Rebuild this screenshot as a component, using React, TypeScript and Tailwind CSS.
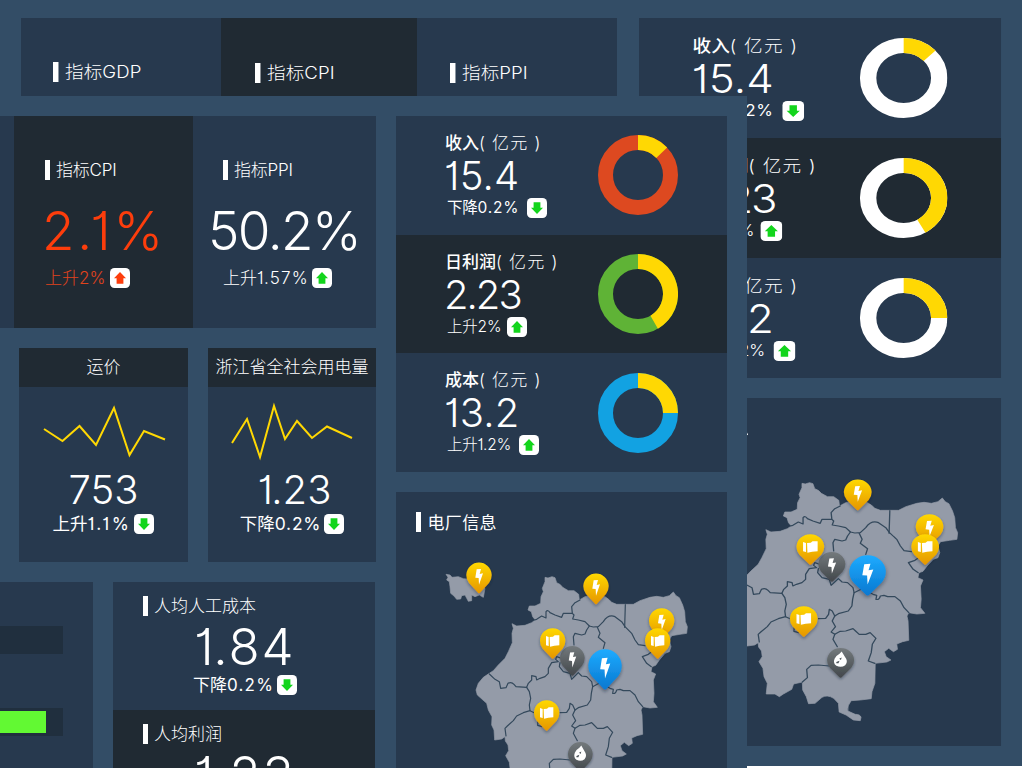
import type { ReactNode } from "react";
import clsx from "clsx";

const FONT = "font-['Inter','Noto_Sans_CJK_SC',sans-serif] [font-feature-settings:'cv01']";

function Badge({ dir, red }: { dir: "up" | "down"; red?: boolean }) {
  return (
    <svg viewBox="0 0 20 20" className={clsx("h-5 w-5 shrink-0", dir === "down" && "rotate-180")}>
      <rect width="20" height="20" rx="4.5" fill="#fff" />
      <path d="M10 4 L16 10.2 H13.4 V15.8 H6.6 V10.2 H4 Z" fill={red ? "#fd3d0c" : "#13d51c"} />
    </svg>
  );
}

function Heading({ children }: { children: ReactNode }) {
  return (
    <div className="flex h-5 items-center gap-[6px]">
      <span className="h-5 w-[5px] shrink-0 bg-white" />
      <span className="text-[17px] leading-5 font-light whitespace-nowrap text-white">{children}</span>
    </div>
  );
}

function Tab({ label, className }: { label: string; className: string }) {
  return (
    <div className={clsx("h-[78px]", className)}>
      <div className="flex h-5 w-max origin-left scale-x-[1.0937] items-center gap-[6px]">
        <span className="h-5 w-[5px] bg-white" />
        <span className="text-[17px] leading-5 font-light tracking-[0.05px] whitespace-nowrap text-white">{label}</span>
      </div>
    </div>
  );
}

const metrics = [
  { name: "收入", value: "15.4", change: "下降", amount: "0.2%", dir: "down" as const, pct: 13, color: "#dd4920", dark: false, gap: "gap-[8px]", num: "tracking-[0.2px]", sub: "", amt: "tracking-[0.8px]" },
  { name: "日利润", value: "2.23", change: "上升", amount: "2%", dir: "up" as const, pct: 41.7, color: "#5fb336", dark: true, gap: "gap-[6px]", num: "tracking-[-2px]", sub: "font-light", amt: "tracking-[-0.1px]" },
  { name: "成本", value: "13.2", change: "上升", amount: "1.2%", dir: "up" as const, pct: 25, color: "#12a2e2", dark: false, gap: "gap-[8px]", num: "tracking-[0.2px]", sub: "font-light", amt: "tracking-normal" },
];

function Donut({ pct, color }: { pct: number; color: string }) {
  const a = (pct / 100) * 2 * Math.PI;
  const x = 40 + 32.5 * Math.sin(a);
  const y = 40 - 32.5 * Math.cos(a);
  return (
    <svg viewBox="0 0 80 80" className="h-20 w-20">
      <g fill="none" strokeWidth="15">
        <circle cx="40" cy="40" r="32.5" stroke={color} />
        <path d={`M40 7.5 A32.5 32.5 0 0 1 ${x} ${y}`} stroke="#ffd803" />
      </g>
    </svg>
  );
}

function Metrics({ row, white }: { row: string; white?: boolean }) {
  return (
    <div className="flex flex-col">
      {metrics.map((m) => (
        <div key={m.name} className={clsx("flex", row, m.dark ? "bg-[#202a33]" : "bg-[#27394e]")}>
          <div className="w-[202px] pt-[15px] pl-[49px] text-white">
            <div className="h-6 text-[17px] leading-6 font-light whitespace-pre">
              <span className="font-medium">{m.name}</span>
              <span className="tracking-[1.2px]">( 亿元 )</span>
            </div>
            <div className={clsx("-ml-px h-[41px] text-[40px] leading-[41px] font-light", m.num)}>{m.value}</div>
            <div className={clsx("flex h-6 items-center pl-0.5 text-[15.5px]", m.gap)}>
              <span className={clsx("leading-6 tracking-[-0.2px] whitespace-nowrap", m.sub)}>
                {m.change}
                <span className={m.amt}>{m.amount}</span>
              </span>
              <Badge dir={m.dir} />
            </div>
          </div>
          <div className="pt-[19.3px]">
            <Donut pct={m.pct} color={white ? "#ffffff" : m.color} />
          </div>
        </div>
      ))}
    </div>
  );
}

const land =
  "M465 292 L474 294 L486 290 L495 293 L500 308 Q512 312 518 322 L535 332 L552 332 L566 343 L568 360 L585 350 L618 340 L645 350 Q660 360 665 367 L680 373 H730 L750 362 L780 352 L800 349 L820 352 L838 347 L850 336 L858 347 L868 353 L878 375 L884 395 L886 425 L892 440 L890 460 L870 463 L845 467 L838 480 L843 500 L838 515 L825 520 L808 540 L797 556 L786 560 L783 575 L797 582 L790 600 L792 640 L790 665 L802 682 L780 684 L758 680 L753 690 L756 705 L758 763 L741 767 L725 774 L727 790 L716 797 L703 787 L691 797 L696 812 L709 822 L698 828 L666 832 L665 892 L657 917 L655 938 L625 942 L600 944 Q588 960 591 975 L611 985 Q625 985 627 994 L625 1004 L606 1002 L586 987 L567 978 L565 952 L552 937 Q535 925 520 934 L501 952 L483 953 L477 932 L467 912 L466 888 L442 894 L437 910 L414 924 L403 932 L391 924 L367 924 L370 892 L361 872 L358 847 L347 827 L356 812 L354 795 L346 783 L345 770 L335 777 L314 780 L312 750 L305 735 L306 710 L295 690 L290 670 L262 645 L258 630 L265 610 L280 592 L298 580 L310 572 L325 555 L345 535 L355 515 L367 488 L366 460 L370 445 L366 431 L380 438 L405 436 L425 428 L436 420 L428 410 L424 395 L414 390 L418 378 L435 378 L452 370 L453 350 L460 335 L457 325 L465 305 Z M168 283 L180 285 L186 292 L205 290 L220 296 L232 297 L285 325 L280 352 L268 345 L255 350 L245 345 L245 362 L235 364 L225 345 L215 347 L212 357 L200 358 L192 348 L182 340 L180 320 L178 305 L170 300 L174 292 Z";

const borders = [
  "M433 420 L440 418 L455 408 L468 414 V395 Q474 388 480 398 L495 405 L515 412 L520 400 L547 400 L545 380 L555 368 L570 360",
  "M547 400 L552 405 L548 417 L565 420 L585 425 L598 438 L610 441 L625 440 L640 425 Q655 402 675 410 L695 425 L705 440 L725 460 L735 480 L745 494 L765 497",
  "M706 374 L704 442",
  "M598 438 L590 450 L585 462 L575 465 L555 460 L550 470 L552 495",
  "M622 442 L630 460 L625 472 L645 488 L640 505",
  "M298 582 L315 598 L328 605 L332 625 L348 623 L354 610 Q364 604 372 613 L378 620 L410 622 L415 610 L425 600 L425 587 L438 590 L440 600 L450 595 L465 590 L475 580 L475 565 L485 548 L505 545 L497 538 L500 530 L515 535",
  "M410 622 L418 635 L422 655 L418 675 L420 692 L400 698 L380 708 L370 722 L352 738 L345 745 L348 768",
  "M420 692 L440 702",
  "M510 548 L508 560 L520 575 L540 580 L545 598 L565 578 L575 588 L590 590 L605 605 L608 620 L604 640 L602 660 L592 675 L565 683 L555 690 L548 675 L540 670 L538 685 L530 697 L510 698",
  "M444 720 L443 736 L456 740",
  "M608 620 L630 608 L660 625 L670 628 L668 640 Q677 643 680 630 L690 628 L700 632 L720 632 L735 645 L745 665 L758 680",
  "M555 690 L548 705 L557 722 L545 738 L555 745 L570 736 L585 735 L605 728 L612 735 L622 745 L640 745 L652 740 L668 757 L658 775 L655 800 L647 825 L665 832",
  "M555 745 L550 760 L562 782",
  "M466 888 L480 875 L478 850 L490 838 L510 837 L540 840",
  "M785 515 L775 523 L757 530 L770 550 L784 560",
];

type PinKind = "bolt" | "book" | "drop";

const pins: { x: number; y: number; r: number; fill: string; kind: PinKind }[] = [
  { x: 267, y: 285, r: 38, fill: "gold", kind: "bolt" },
  { x: 618, y: 318, r: 38, fill: "gold", kind: "bolt" },
  { x: 815, y: 422, r: 38, fill: "gold", kind: "bolt" },
  { x: 547, y: 534, r: 37, fill: "grey", kind: "bolt" },
  { x: 488, y: 482, r: 38, fill: "gold", kind: "book" },
  { x: 803, y: 482, r: 38, fill: "gold", kind: "book" },
  { x: 645, y: 557, r: 50, fill: "blue", kind: "bolt" },
  { x: 470, y: 698, r: 38, fill: "gold", kind: "book" },
  { x: 571, y: 822, r: 37, fill: "grey", kind: "drop" },
];

const glyphs: Record<PinKind, ReactNode> = {
  bolt: <path d="M-7 -19 L6 -20 L2 -5 L12 -7 L0 27 L-1 7 L-11 6 Z" fill="#fff" />,
  book: (
    <g fill="#fff">
      <path d="M-20 -16 L-12 -13 V14 L-20 12 Z" />
      <path d="M-9 -13 L1 -14 L6 -18 L20 -18 V12 L5 13 L-8 16 Z" />
    </g>
  ),
  drop: (
    <>
      <path d="M3 -28 L12 -12 Q23 3 13 14 Q2 23 -12 16 Q-22 8 -17 -6 Q-13 -15 -3 -21 Z" fill="#fff" />
      <path d="M-4 -6 L3 -10 L1 -2 Z M-12 4 L-3 0 L-6 8 L-12 8 Z" fill="#4b5258" />
    </>
  ),
};

function PlantMap({ id }: { id: string }) {
  return (
    <svg viewBox="18 36 993 1044" className="block h-[348px] w-[331px]">
      <defs>
        <linearGradient id={`${id}-gold`} x1="0" y1="0" x2="0" y2="1">
          <stop offset="0" stopColor="#ffd800" />
          <stop offset="1" stopColor="#e59600" />
        </linearGradient>
        <linearGradient id={`${id}-grey`} x1="0" y1="0" x2="0" y2="1">
          <stop offset="0" stopColor="#747a7d" />
          <stop offset="1" stopColor="#42474b" />
        </linearGradient>
        <linearGradient id={`${id}-blue`} x1="0" y1="0" x2="0" y2="1">
          <stop offset="0" stopColor="#1eabff" />
          <stop offset="1" stopColor="#0878d0" />
        </linearGradient>
        <filter id={`${id}-shadow`} x="-30%" y="-30%" width="160%" height="160%">
          <feDropShadow dx="0" dy="5" stdDeviation="4" floodColor="#1c2733" floodOpacity="0.45" />
        </filter>
      </defs>
      <path d={land} fill="#949ba8" stroke="#949ba8" strokeWidth="2" strokeLinejoin="round" />
      <g fill="none" stroke="#34495c" strokeWidth="3.6" strokeLinejoin="round" strokeLinecap="round">
        {borders.map((d) => (
          <path key={d} d={d} />
        ))}
      </g>
      {pins.map((p) => (
        <g key={`${p.x}-${p.y}`} transform={`translate(${p.x} ${p.y})`}>
          <g transform={`scale(${p.r / 38})`}>
            <path
              d="M-30 24 A38 38 0 1 1 30 24 L3 53 Q0 56 -3 53 Z"
              fill={`url(#${id}-${p.fill})`}
              filter={`url(#${id}-shadow)`}
            />
            <g transform="translate(0 2)">{glyphs[p.kind]}</g>
          </g>
        </g>
      ))}
    </svg>
  );
}

function MapPanel({ id }: { id: string }) {
  return (
    <div className="relative h-[348px] w-[331px] shrink-0 bg-[#27394e]">
      <PlantMap id={id} />
      <div className="absolute top-5 left-5 flex h-5 items-center gap-[6.5px]">
        <span className="h-5 w-[5px] bg-white" />
        <span className="pt-px text-[17px] leading-5 tracking-[0.35px] text-white">电厂信息</span>
      </div>
    </div>
  );
}

function Stat({ title, points, value, change, amount, amt, className, num }: { title: string; points: string; value: string; change: string; amount: string; amt: string; className: string; num: string }) {
  return (
    <div className={clsx("flex h-[213.5px] flex-col items-center bg-[#27394e] text-white", className)}>
      <div className="h-[39px] w-full bg-[#202a33] text-center text-[17px] leading-[38px] font-light whitespace-nowrap">{title}</div>
      <svg viewBox="0 0 168 84" className="h-[84px] w-[168px] shrink-0">
        <polyline points={points} fill="none" stroke="#ffd803" strokeWidth="2" strokeLinejoin="miter" />
      </svg>
      <div className={clsx("h-[38px] text-[40px] leading-[38px] font-light", num)}>{value}</div>
      <div className="mt-[3px] flex h-6 items-center gap-[3px] text-[17.5px]">
        <span className="leading-6 whitespace-nowrap">
          {change}
          <span className={amt}>{amount}</span>
        </span>
        <Badge dir="down" />
      </div>
    </div>
  );
}

function PerCapita({ title, value, className }: { title: string; value: string; className: string }) {
  return (
    <div className={clsx("h-32 pl-[30px] text-white", className)}>
      <Heading>{title}</Heading>
      <div className="mt-[5px] h-[52px] pl-[51px] text-[51px] leading-[52px] font-light tracking-[1.8px]">{value}</div>
      <div className="flex h-6 items-center gap-[3px] pl-[50px] text-[17px]">
        <span className="leading-6 whitespace-nowrap">
          下降<span className="tracking-[1.2px]">0.2%</span>
        </span>
        <Badge dir="down" />
      </div>
    </div>
  );
}

export default function App() {
  return (
    <div className={clsx("relative h-[768px] w-[1022px] overflow-hidden bg-[#334d66]", FONT)}>
      <div className="flex gap-[22px] pt-[18px] pl-[21px]">
        <div className="flex h-[78px] w-[596px]">
          <Tab label="指标GDP" className="w-[200px] bg-[#27394e] pt-11 pl-8" />
          <Tab label="指标CPI" className="w-[196px] bg-[#202a33] pt-[45px] pl-[34px]" />
          <Tab label="指标PPI" className="w-[200px] bg-[#27394e] pt-[45px] pl-[33px]" />
        </div>
        <div className="w-[362px]">
          <div className="flex w-[331px] origin-left scale-x-[1.0937] flex-col gap-5">
            <Metrics row="h-[120px] pt-px" white />
            <MapPanel id="back" />
          </div>
        </div>
      </div>
      <div className="mt-5 h-[3px] bg-white" />

      <div className="absolute top-24 left-0 flex h-[672px] w-[747px] gap-5 overflow-hidden bg-[#334d66] pt-5">
        <div className="flex w-[376px] flex-col">
          <div className="flex h-[212px] shrink-0">
            <div className="w-3.5 bg-[#27394e]" />
            <div className="w-[179px] bg-[#202a33] pt-11 pl-[31px]">
              <Heading>
                <span className="tracking-[-0.2px]">指标CPI</span>
              </Heading>
              <div className="mt-6 -ml-[3px] h-[54px] text-[53px] leading-[54px] font-light tracking-[2.7px] text-[#fd3d0c]">2.1%</div>
              <div className="mt-2 flex h-6 items-center gap-[5px] text-[17px] text-[#e0431c]">
                <span className="leading-6 font-light whitespace-nowrap">上升2%</span>
                <Badge dir="up" red />
              </div>
            </div>
            <div className="w-[183px] bg-[#27394e] pt-11 pl-[30px] text-white">
              <Heading>
                <span className="tracking-[-0.2px]">指标PPI</span>
              </Heading>
              <div className="mt-6 -ml-[15px] h-[54px] text-[53px] leading-[54px] font-[350] tracking-[-1.6px] whitespace-nowrap">50.2%</div>
              <div className="mt-2 flex h-6 items-center gap-[3px] text-[17px]">
                <span className="leading-6 font-light whitespace-nowrap">
                  上升<span className="tracking-[1.2px]">1.57%</span>
                </span>
                <Badge dir="up" />
              </div>
            </div>
          </div>
          <div className="mt-5 flex shrink-0 gap-5 pl-[19px]">
            <Stat
              title="运价"
              points="24,42 42.5,54 59.5,39 76,58 94,21 109.5,68 124,44 145,52.5"
              value="753"
              change="上升"
              amount="1.1%"
              amt="tracking-[2.5px]"
              className="w-[169px]"
              num="tracking-normal"
            />
            <Stat
              title="浙江省全社会用电量"
              points="24,56 39,32 52,70 66,19 77,52 89,34 104,51 119,39.5 144,51"
              value="1.23"
              change="下降"
              amount="0.2%"
              amt="tracking-[0.8px]"
              className="w-[168px]"
              num="pl-[5px] tracking-normal"
            />
          </div>
          <div className="mt-[20.5px] flex gap-5">
            <div className="h-[186px] w-[93px] bg-[#27394e] pt-11">
              <div className="h-7 w-[63px] bg-[#202f3e]" />
              <div className="mt-[54px] h-7 w-[63px] bg-[#202f3e] py-[3px]">
                <div className="h-[22px] w-[46px] bg-[#62f933]" />
              </div>
            </div>
            <div className="w-[262px]">
              <PerCapita title="人均人工成本" value="1.84" className="bg-[#27394e] pt-3.5" />
              <PerCapita title="人均利润" value="1.23" className="bg-[#202a33] pt-3.5" />
            </div>
          </div>
        </div>
        <div className="flex w-[331px] flex-col gap-5">
          <Metrics row="h-[118.7px]" />
          <MapPanel id="front" />
        </div>
      </div>
    </div>
  );
}
